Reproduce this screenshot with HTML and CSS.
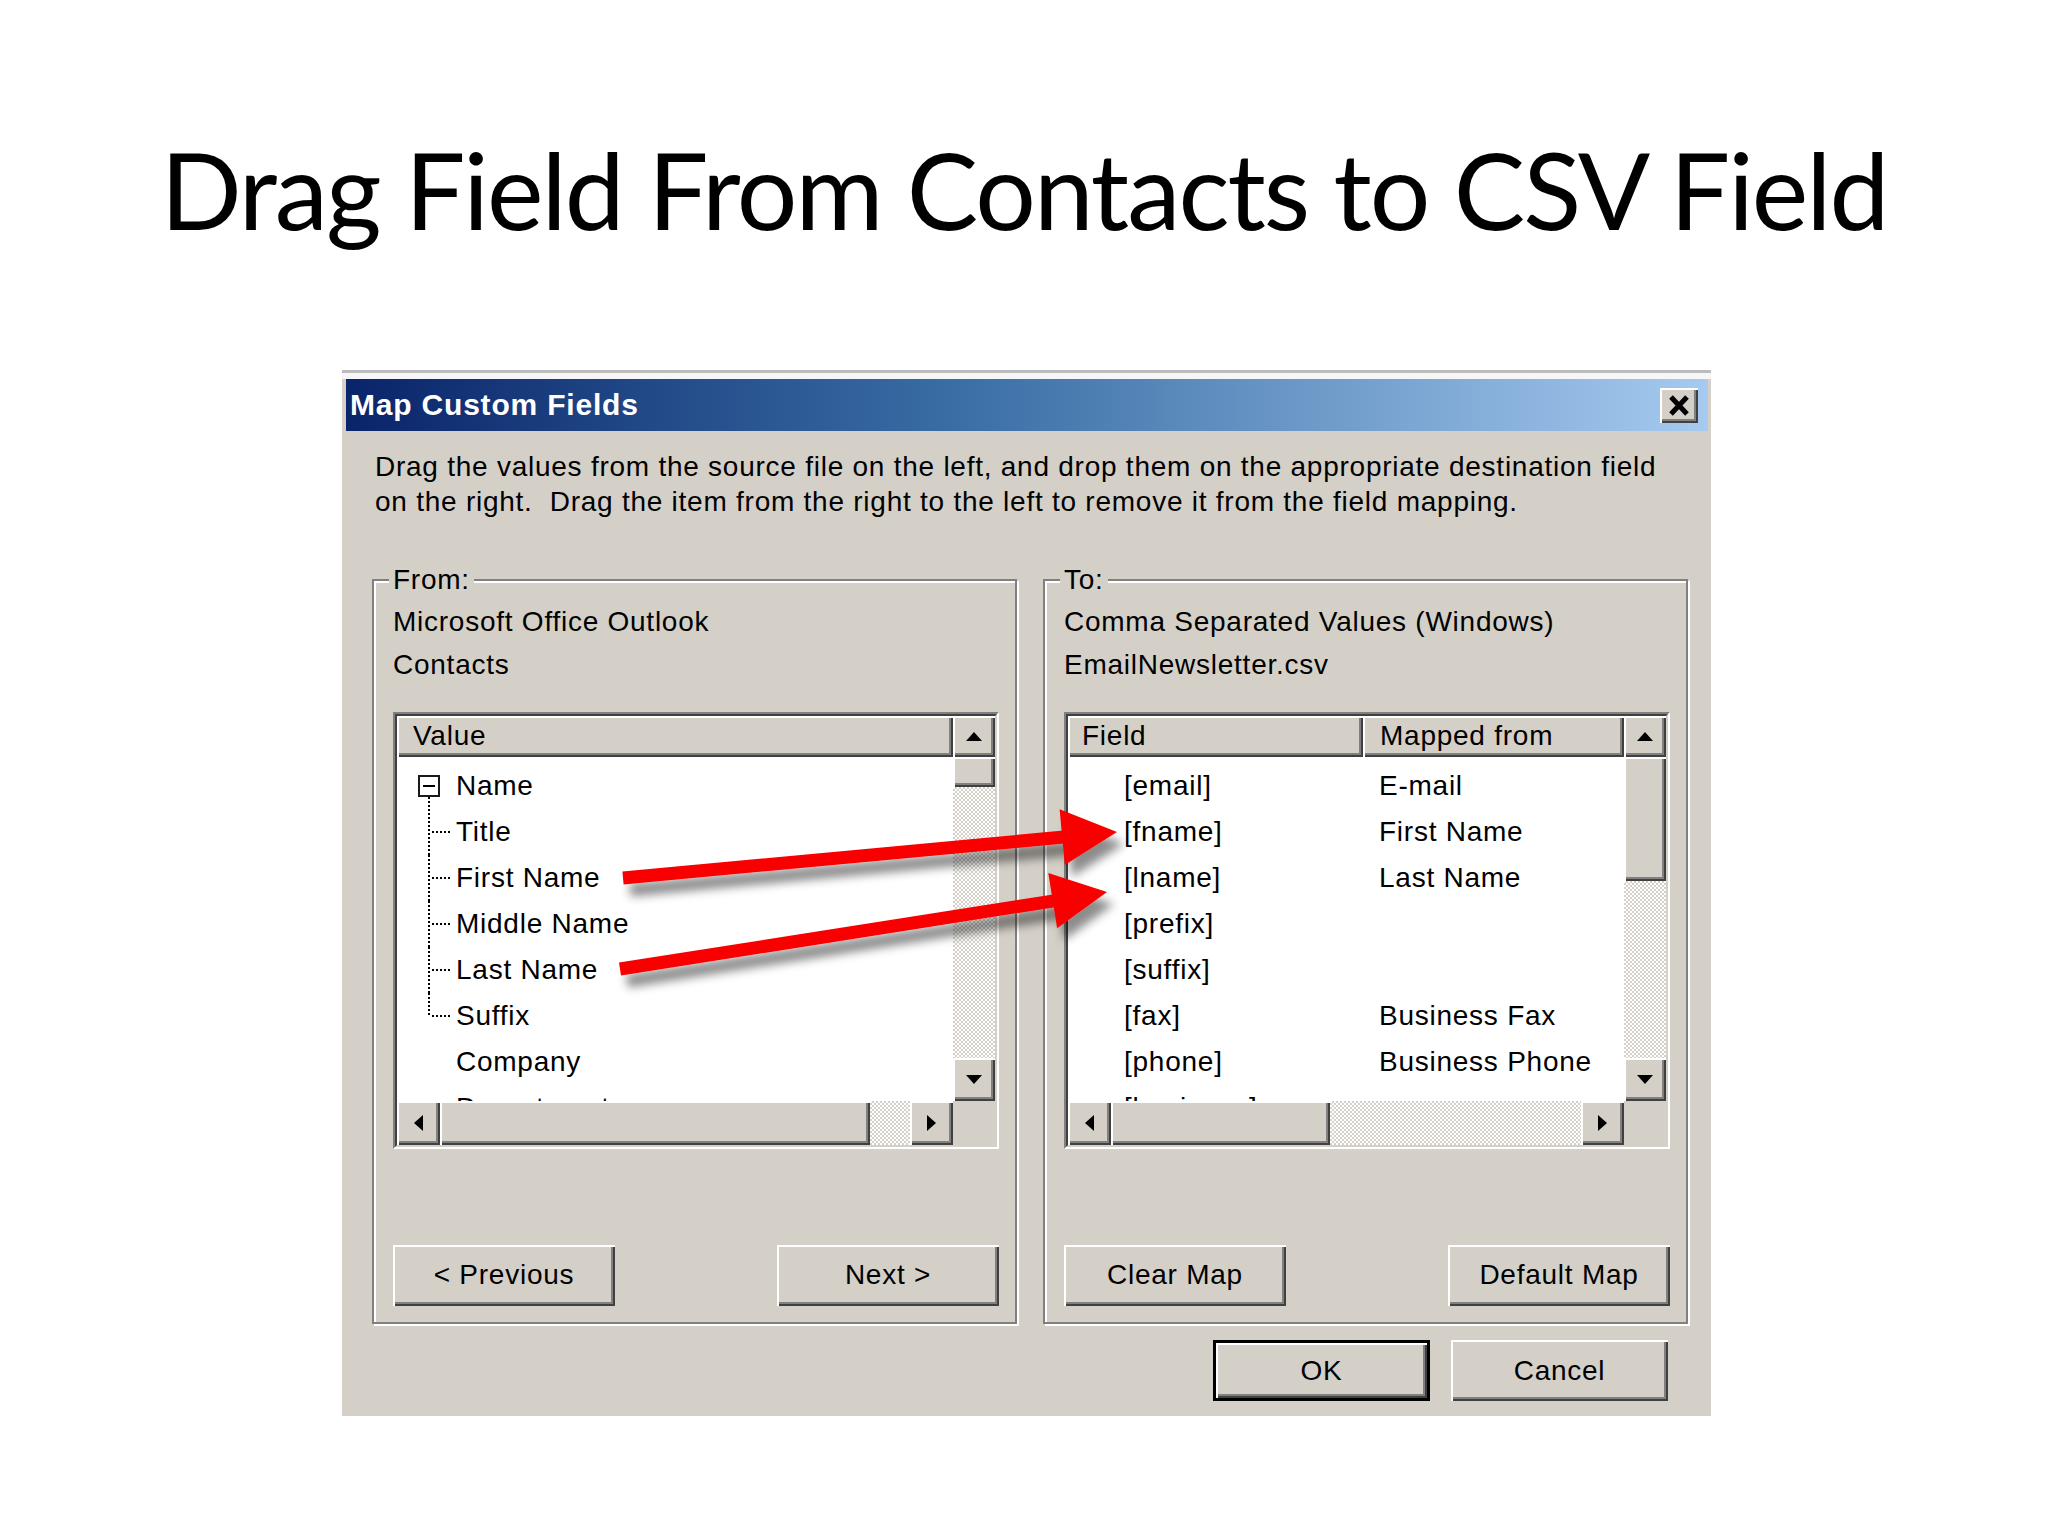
FILE: index.html
```html
<!DOCTYPE html>
<html>
<head>
<meta charset="utf-8">
<title>Map Custom Fields</title>
<link rel="stylesheet" href="styles.css">
</head>
<body>
<div class="slide">
  <h1 class="slide-title">Drag Field From Contacts to CSV Field</h1>

  <div class="dialog">
    <div class="titlebar">
      <span class="titlebar-text">Map Custom Fields</span>
      <span class="close-btn"><svg width="38" height="35" viewBox="0 0 38 35"><path d="M11 9 L27 26 M27 9 L11 26" stroke="#000" stroke-width="5" fill="none"/></svg></span>
    </div>

    <p class="desc">Drag the values from the source file on the left, and drop them on the appropriate destination field<br>on the right.&nbsp; Drag the item from the right to the left to remove it from the field mapping.</p>

    <div class="groups">
      <fieldset class="group">
        <legend>From:</legend>
        <div class="src-line">Microsoft Office Outlook</div>
        <div class="src-line">Contacts</div>
        <div class="list">
          <div class="list-inner">
            <div class="list-main">
              <div class="list-header">
                <div class="hcell hcell-value">Value</div>
              </div>
              <div class="list-rows">
                <div class="tree-row"><div class="gutter gutter-root"><span class="expander"></span></div><span>Name</span></div>
                <div class="tree-row"><div class="gutter gutter-child"></div><span>Title</span></div>
                <div class="tree-row"><div class="gutter gutter-child"></div><span>First Name</span></div>
                <div class="tree-row"><div class="gutter gutter-child"></div><span>Middle Name</span></div>
                <div class="tree-row"><div class="gutter gutter-child"></div><span>Last Name</span></div>
                <div class="tree-row"><div class="gutter gutter-child gutter-last"></div><span>Suffix</span></div>
                <div class="tree-row"><div class="gutter"></div><span>Company</span></div>
                <div class="tree-row"><div class="gutter"></div><span>Department</span></div>
              </div>
            </div>
            <div class="vscroll">
              <div class="sb-btn sb-up"><svg width="16" height="9" viewBox="0 0 16 9"><polygon points="8,0 16,9 0,9" fill="#000"/></svg></div>
              <div class="sb-thumb vthumb-left"></div>
              <div class="sb-track"></div>
              <div class="sb-btn sb-down"><svg width="16" height="9" viewBox="0 0 16 9"><polygon points="0,0 16,0 8,9" fill="#000"/></svg></div>
            </div>
            <div class="hscroll">
              <div class="sb-btn sb-left"><svg width="9" height="16" viewBox="0 0 9 16"><polygon points="0,8 9,0 9,16" fill="#000"/></svg></div>
              <div class="sb-thumb hthumb-left"></div>
              <div class="sb-track"></div>
              <div class="sb-btn sb-right"><svg width="9" height="16" viewBox="0 0 9 16"><polygon points="0,0 9,8 0,16" fill="#000"/></svg></div>
            </div>
            <div class="corner"></div>
          </div>
        </div>
        <div class="group-buttons">
          <button class="btn">&lt; Previous</button>
          <button class="btn">Next &gt;</button>
        </div>
      </fieldset>

      <fieldset class="group">
        <legend>To:</legend>
        <div class="src-line">Comma Separated Values (Windows)</div>
        <div class="src-line">EmailNewsletter.csv</div>
        <div class="list">
          <div class="list-inner">
            <div class="list-main">
              <div class="list-header map-header">
                <div class="hcell hcell-field">Field</div>
                <div class="hcell hcell-mapped">Mapped from</div>
              </div>
              <div class="list-rows">
                <div class="map-row"><span class="c-field">[email]</span><span class="c-mapped">E-mail</span></div>
                <div class="map-row"><span class="c-field">[fname]</span><span class="c-mapped">First Name</span></div>
                <div class="map-row"><span class="c-field">[lname]</span><span class="c-mapped">Last Name</span></div>
                <div class="map-row"><span class="c-field">[prefix]</span><span class="c-mapped"></span></div>
                <div class="map-row"><span class="c-field">[suffix]</span><span class="c-mapped"></span></div>
                <div class="map-row"><span class="c-field">[fax]</span><span class="c-mapped">Business Fax</span></div>
                <div class="map-row"><span class="c-field">[phone]</span><span class="c-mapped">Business Phone</span></div>
                <div class="map-row"><span class="c-field">[business]</span><span class="c-mapped"></span></div>
              </div>
            </div>
            <div class="vscroll">
              <div class="sb-btn sb-up"><svg width="16" height="9" viewBox="0 0 16 9"><polygon points="8,0 16,9 0,9" fill="#000"/></svg></div>
              <div class="sb-thumb vthumb-right"></div>
              <div class="sb-track"></div>
              <div class="sb-btn sb-down"><svg width="16" height="9" viewBox="0 0 16 9"><polygon points="0,0 16,0 8,9" fill="#000"/></svg></div>
            </div>
            <div class="hscroll">
              <div class="sb-btn sb-left"><svg width="9" height="16" viewBox="0 0 9 16"><polygon points="0,8 9,0 9,16" fill="#000"/></svg></div>
              <div class="sb-thumb hthumb-right"></div>
              <div class="sb-track"></div>
              <div class="sb-btn sb-right"><svg width="9" height="16" viewBox="0 0 9 16"><polygon points="0,0 9,8 0,16" fill="#000"/></svg></div>
            </div>
            <div class="corner"></div>
          </div>
        </div>
        <div class="group-buttons">
          <button class="btn">Clear Map</button>
          <button class="btn">Default Map</button>
        </div>
      </fieldset>
    </div>

    <div class="footer">
      <button class="btn btn-footer btn-default">OK</button>
      <button class="btn btn-footer">Cancel</button>
    </div>
  </div>

  <svg class="arrows" width="2048" height="1536" viewBox="0 0 2048 1536">
    <defs>
      <filter id="shadow" x="-20%" y="-50%" width="140%" height="200%">
        <feDropShadow dx="7" dy="12" stdDeviation="5" flood-color="#000" flood-opacity="0.45"/>
      </filter>
    </defs>
    <g filter="url(#shadow)" fill="#f80000" stroke="none">
      <path d="M623 878 L1064 837" stroke="#f80000" stroke-width="13"/>
      <polygon points="1117,832 1064.8,865 1059.6,809.2"/>
    </g>
    <g filter="url(#shadow)" fill="#f80000" stroke="none">
      <path d="M620 969 L1054 900.8" stroke="#f80000" stroke-width="13"/>
      <polygon points="1107,892 1057.1,928.3 1048.3,872.9"/>
    </g>
  </svg>
</div>
</body>
</html>
```

FILE: styles.css
```css
html, body {
  margin: 0;
  padding: 0;
  background: #ffffff;
}

.slide {
  position: relative;
  width: 2048px;
  height: 1536px;
  overflow: hidden;
  background: #ffffff;
}

.slide-title {
  margin: 125px 0 0 0;
  height: 128px;
  font-family: "Lato", "Open Sans", sans-serif;
  font-weight: 400;
  font-size: 107px;
  line-height: 128px;
  letter-spacing: -2px;
  text-align: center;
  color: #000;
  white-space: nowrap;
}

/* ---------- dialog ---------- */
.dialog {
  margin: 117px 0 0 342px;
  width: 1369px;
  box-sizing: border-box;
  border-top: 3px solid #bcbcbc;
  padding: 6px 0 15px 0;
  background: linear-gradient(#f6f6f6 0 6px, #d4d0c8 6px);
  font-family: "Liberation Sans", Arial, sans-serif;
  font-size: 28px;
  letter-spacing: 0.75px;
  color: #000;
}

.titlebar {
  margin: 0 3px 0 4px;
  height: 52px;
  display: flex;
  align-items: center;
  justify-content: space-between;
  background: linear-gradient(to right, #0a246a 0%, #3a6ea5 45%, #a6caf0 100%);
}

.titlebar-text {
  padding-left: 4px;
  color: #fff;
  font-weight: 700;
  font-size: 30px;
  letter-spacing: 0.8px;
}

.close-btn {
  width: 38px;
  height: 35px;
  margin-right: 10px;
  background: #d4d0c8;
  box-shadow: inset 2px 2px #ffffff, inset -2px -2px #404040, inset -4px -4px #808080;
  display: flex;
}

.desc {
  margin: 17.5px 0 0 33px;
  line-height: 35px;
  white-space: nowrap;
}

/* ---------- group boxes ---------- */
.groups {
  margin: 45.5px 0 0 30px;
  display: flex;
  gap: 26px;
}

.group {
  width: 645px;
  height: 760px;
  box-sizing: border-box;
  margin: 0;
  padding: 4px 16px 16px 19px;
  border: 2px solid #808080;
  box-shadow: inset 2px 2px 0 #ffffff, 2px 2px 0 #ffffff;
  min-inline-size: 0;
  display: flex;
  flex-direction: column;
}

.group legend {
  padding: 0 4px;
  margin-left: -4px;
  line-height: 32px;
  background: #d4d0c8;
}

.src-line {
  line-height: 43px;
  white-space: nowrap;
}

/* ---------- list views ---------- */
.list {
  margin-top: 25.5px;
  width: 606px;
  height: 437px;
  box-sizing: border-box;
  border: 2px solid;
  border-color: #808080 #ffffff #ffffff #808080;
  flex: none;
}

.list-inner {
  height: 100%;
  box-sizing: border-box;
  border: 2px solid;
  border-color: #404040 #d4d0c8 #d4d0c8 #404040;
  background: #ffffff;
  display: grid;
  grid-template-columns: 1fr 42px;
  grid-template-rows: 1fr 44px;
}

.list-main {
  overflow: hidden;
  display: flex;
  flex-direction: column;
  min-width: 0;
}

.list-header {
  height: 41px;
  flex: none;
  display: flex;
}

.hcell {
  height: 41px;
  box-sizing: border-box;
  background: #d4d0c8;
  box-shadow: inset 2px 2px #ffffff, inset -2px -2px #404040, inset -4px -4px #808080;
  display: flex;
  align-items: center;
  white-space: nowrap;
}

.hcell-value { flex: 1; padding-left: 16px; }
.hcell-field { width: 295px; padding-left: 14px; }
.hcell-mapped { flex: 1; padding-left: 17px; }

.list-rows {
  padding-top: 6px;
}

.tree-row,
.map-row {
  height: 46px;
  display: flex;
  align-items: center;
  white-space: nowrap;
}

.gutter {
  width: 59px;
  flex: none;
  align-self: stretch;
}

.gutter-child {
  background-image:
    repeating-linear-gradient(to bottom, #000 0 2px, transparent 2px 4px),
    repeating-linear-gradient(to right, #000 0 2px, transparent 2px 4px);
  background-size: 2px 100%, 20px 2px;
  background-position: 31px 0, 35px 50%;
  background-repeat: no-repeat;
}

.gutter-last {
  background-size: 2px 50%, 20px 2px;
}

.gutter-root {
  display: flex;
  align-items: center;
  background-image: repeating-linear-gradient(to bottom, #000 0 2px, transparent 2px 4px);
  background-size: 2px 12px;
  background-position: 31px 100%;
  background-repeat: no-repeat;
}

.expander {
  margin-left: 21px;
  width: 22px;
  height: 22px;
  box-sizing: border-box;
  border: 2px solid #1a1a1a;
  background: linear-gradient(#000, #000) center / 12px 2px no-repeat, #ffffff;
}

.c-field {
  width: 295px;
  flex: none;
  box-sizing: border-box;
  padding-left: 56px;
}

.c-mapped {
  padding-left: 16px;
}

/* ---------- scrollbars ---------- */
.vscroll {
  display: flex;
  flex-direction: column;
  background: #d4d0c8;
}

.hscroll {
  display: flex;
  background: #d4d0c8;
}

.corner {
  background: #d4d0c8;
}

.sb-btn {
  flex: none;
  display: flex;
  align-items: center;
  justify-content: center;
  background: #d4d0c8;
  box-shadow: inset 2px 2px #ffffff, inset -2px -2px #404040, inset -4px -4px #808080;
}

.vscroll .sb-up { height: 41px; }
.vscroll .sb-down { height: 43px; }
.hscroll .sb-left, .hscroll .sb-right { width: 43px; }

.sb-thumb {
  flex: none;
  background: #d4d0c8;
  box-shadow: inset 2px 2px #ffffff, inset -2px -2px #404040, inset -4px -4px #808080;
}

.vthumb-left { height: 30px; }
.vthumb-right { height: 124px; }
.hthumb-left { width: 430px; }
.hthumb-right { width: 219px; }

.sb-track {
  flex: 1;
  background: repeating-conic-gradient(#d4d0c8 0 25%, #ffffff 0 50%) 0 0 / 4px 4px;
}

/* ---------- buttons ---------- */
.group-buttons {
  margin-top: 96px;
  display: flex;
  justify-content: space-between;
}

.btn {
  width: 222px;
  height: 61px;
  margin: 0;
  padding: 0;
  border: none;
  background: #d4d0c8;
  box-shadow: inset 2px 2px #ffffff, inset -2px -2px #404040, inset -4px -4px #808080;
  font-family: "Liberation Sans", Arial, sans-serif;
  font-size: 28px;
  letter-spacing: 0.75px;
  color: #000;
}

.btn-footer {
  width: 217px;
}

.btn-default {
  border: 3px solid #000;
}

.footer {
  margin-top: 16px;
  padding-right: 43px;
  display: flex;
  justify-content: flex-end;
  gap: 21px;
}

/* ---------- annotation arrows ---------- */
.arrows {
  position: absolute;
  left: 0;
  top: 0;
  pointer-events: none;
}
```
